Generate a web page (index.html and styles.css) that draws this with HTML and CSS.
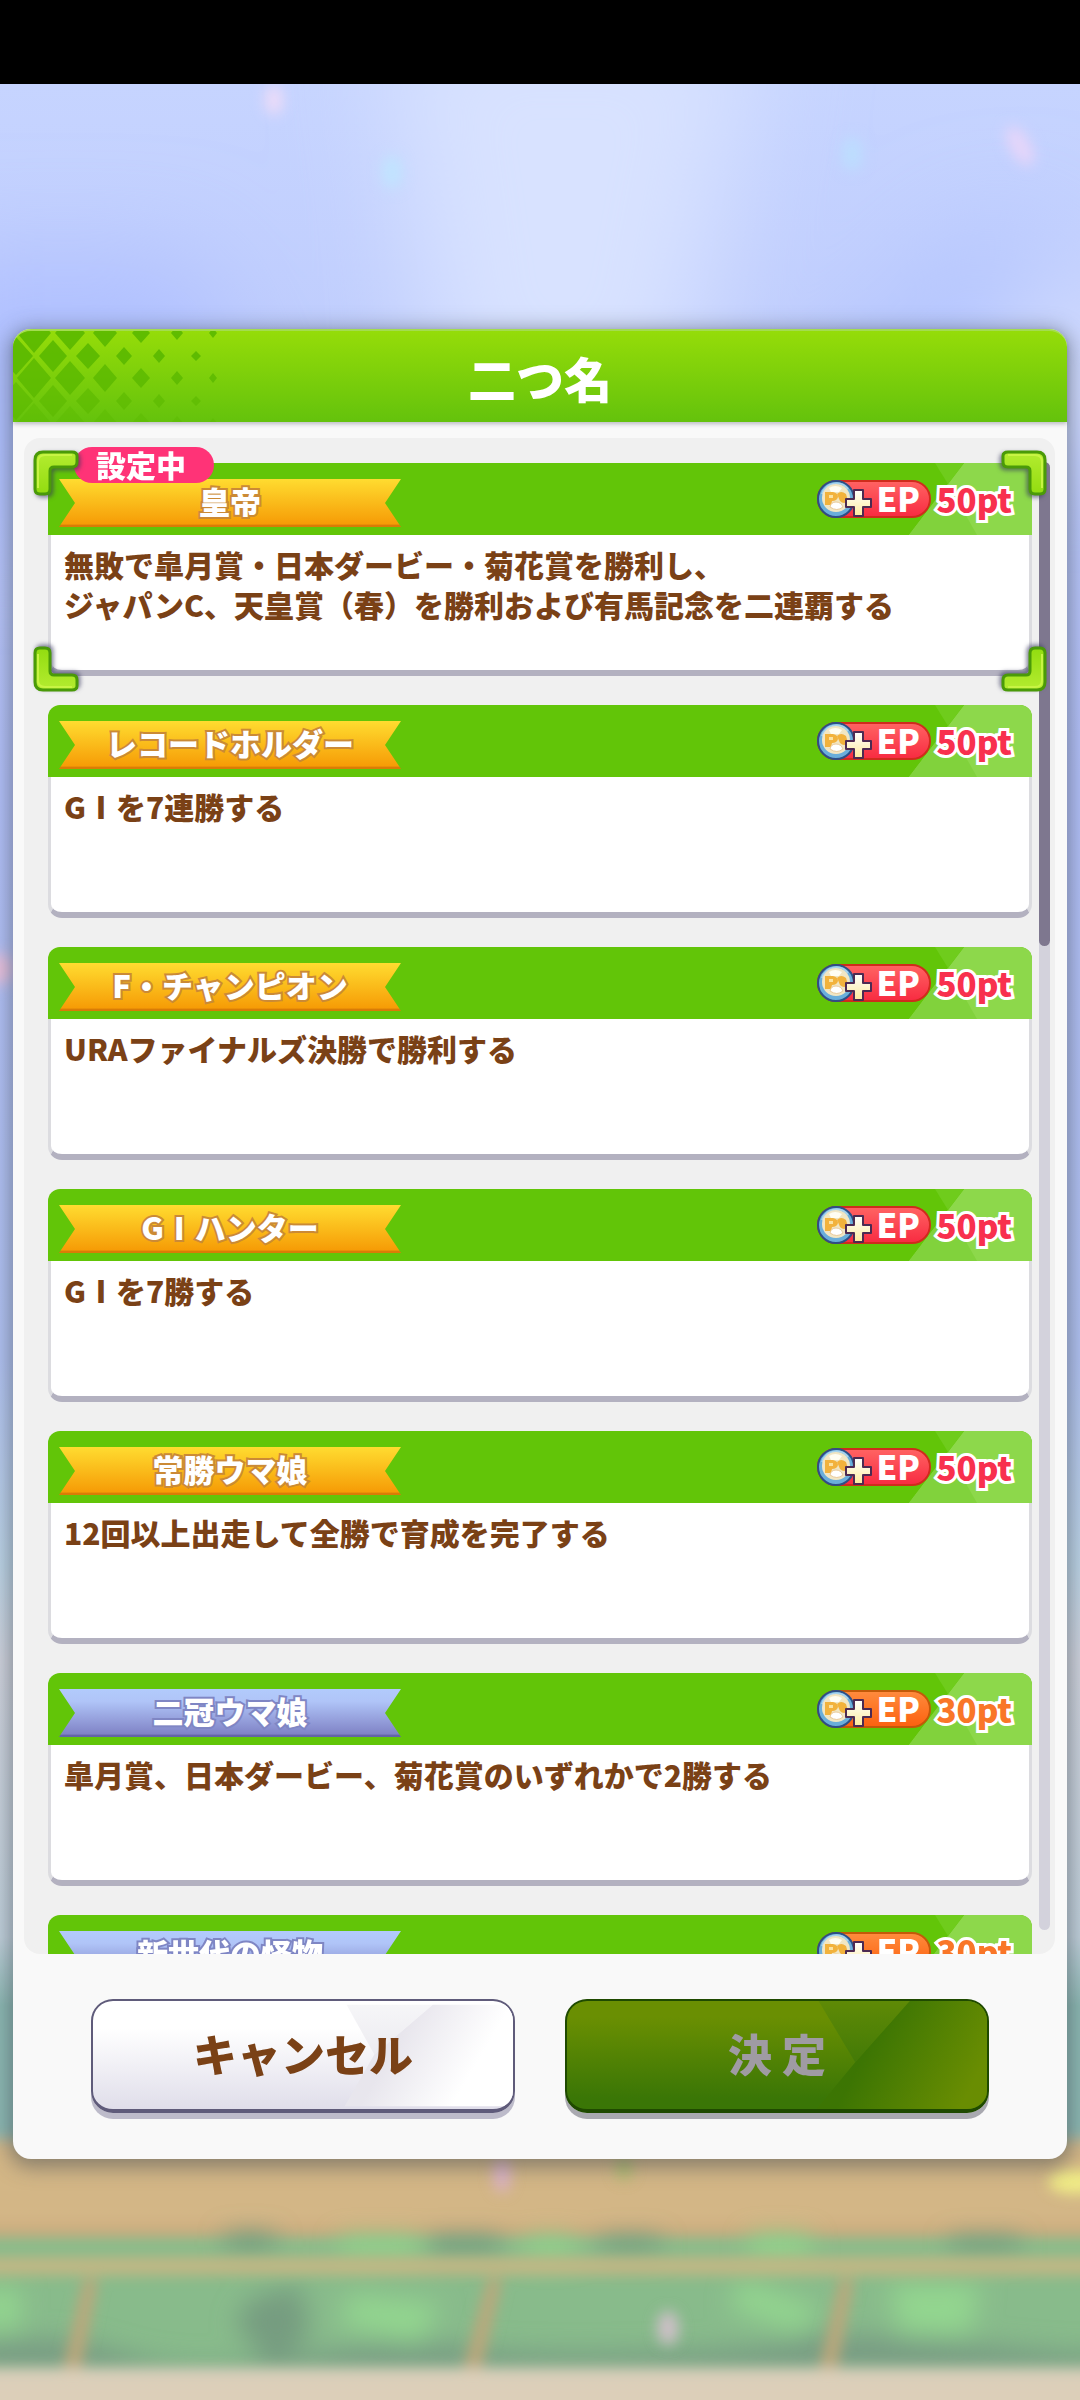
FILE: index.html
```html
<!DOCTYPE html>
<html lang="ja">
<head>
  <meta charset="UTF-8">
  <meta name="viewport" content="width=device-width, initial-scale=1.0">
  <title>二つ名</title>
  <link rel="stylesheet" href="styles.css">
</head>
<body>
  <!-- 共通アイコン -->
  <svg class="defs" aria-hidden="true">
    <defs>
      <linearGradient id="bracketFill" x1="0" y1="0" x2="0" y2="1">
        <stop offset="0" stop-color="#b4ec30"/>
        <stop offset="1" stop-color="#92dc10"/>
      </linearGradient>
      <linearGradient id="plusFill" x1="0" y1="0" x2="0" y2="1">
        <stop offset="0" stop-color="#ffffff"/>
        <stop offset="1" stop-color="#fdeb9c"/>
      </linearGradient>
    </defs>
    <symbol id="bracket" viewBox="0 0 46 46">
      <path d="M10 2H39Q44 2 44 6V12Q44 17 39 17H21Q17 17 17 21V39Q17 44 12 44H7Q2 44 2 39V10Q2 2 10 2Z" fill="url(#bracketFill)" stroke="#4a9a08" stroke-width="3"/>
      <path d="M5 38V12Q5 5 12 5H39" fill="none" stroke="#c8f444" stroke-width="2"/>
    </symbol>
    <symbol id="shine" viewBox="0 0 125 72">
      <path d="M57 0H125V72H2Z" fill="#8dd84b"/>
      <path d="M28 0H57L41 21Z" fill="#6fcc1c"/>
      <path d="M41 21L70 72H2Z" fill="#81d23c"/>
    </symbol>
    <symbol id="coin" viewBox="0 0 56 38">
      <circle cx="19" cy="19" r="18" fill="#6aaedb" stroke="#2d4f86" stroke-width="2"/>
      <path d="M5 14A15 15 0 0 1 31 9" fill="none" stroke="#a5d2ee" stroke-width="2"/>
      <circle cx="19" cy="18" r="14" fill="#f1e6c4"/>
      <path d="M12 8q6-4 13 0l-3 4h-8z" fill="#fffdf2"/>
      <path d="M8 25V12h8q5 1 5 5-1 4-6 4l-1 4z" fill="#f2b23c"/>
      <path d="M12 15h4v3h-4z" fill="#fbe2a0"/>
      <path d="M20 14q4-4 9 0l2 7q-4 4-8 0z" fill="#f2b23c"/>
      <path d="M13 27q1-5 6-5t7 5q-6 5-13 0z" fill="#ffffff" stroke="#e9c99a"/>
      <path d="M37 10h9v9h8v8h-8v9h-9v-9h-8v-8h8z" fill="url(#plusFill)" stroke="#4d2a52" stroke-width="2" stroke-linejoin="round"/>
    </symbol>
  </svg>

  <div class="status-bar"></div>

  <main class="stage">
    <svg class="scene" viewBox="0 0 1080 2316" preserveAspectRatio="xMidYMax slice" aria-hidden="true">
      <defs>
        <linearGradient id="sky" x1="0" y1="0" x2="0" y2="1">
          <stop offset="0" stop-color="#c6d4ff"/>
          <stop offset="0.300" stop-color="#b4c1fb"/>
          <stop offset="0.550" stop-color="#b3c4f4"/>
          <stop offset="0.640" stop-color="#bfd6e8"/>
          <stop offset="0.680" stop-color="#d2d5df"/>
          <stop offset="0.800" stop-color="#c3d2dd"/>
          <stop offset="0.830" stop-color="#8db9b3"/>
          <stop offset="0.880" stop-color="#8db9b3"/>
        </linearGradient>
        <filter id="haze" x="-50%" y="-50%" width="200%" height="200%"><feGaussianBlur stdDeviation="55"/></filter>
        <filter id="leaf" x="-20%" y="-50%" width="140%" height="200%"><feGaussianBlur stdDeviation="13"/></filter>
        <filter id="soft" x="-20%" y="-20%" width="140%" height="140%"><feGaussianBlur stdDeviation="7"/></filter>
      </defs>
      <rect width="1080" height="2316" fill="url(#sky)"/>
      <!-- 雲 -->
      <g filter="url(#haze)">
        <path d="M-80 180H200L270 440H-80Z" fill="#afbfff"/>
        <path d="M380 -80H760L680 340H440Z" fill="#d8e2ff"/>
        <path d="M960 160L1060 140L900 360L800 340Z" fill="#b0c2ff"/>
        <path d="M1020 280L1120 180V360H980Z" fill="#dde5ff"/>
      </g>
      <!-- コース -->
      <g filter="url(#soft)">
        <path d="M-30 2055H1110V2156H-30Z" fill="#d3b686"/>
        <path d="M-30 2142H1110V2155H-30Z" fill="#cda87c"/>
        <path d="M-30 2152H1110V2290H-30Z" fill="#88bb8b"/>
      </g>
      <g filter="url(#leaf)">
        <path d="M225 2150h50v18h-50zM430 2154h70v18h-70zM600 2154h60v16h-60zM950 2154h70v16h-70z" fill="#6f957c"/>
        <path d="M340 2154h80v20h-80zM525 2155h50v20h-50zM750 2152h60v24h-60z" fill="#93d68c"/>
        <path d="M250 2215L300 2200 310 2250 275 2285 235 2240Z" fill="#769c80"/>
        <path d="M350 2210l90 10-20 40-80-20zM740 2195l80 30-20 24-70-25zM890 2200h90l-10 50h-70zM-20 2205h40v40h-40z" fill="#93d68f"/>
        <path d="M-30 2262Q50 2245 120 2268T300 2272 460 2262 640 2268 800 2255 1000 2262 1110 2256V2288H-30Z" fill="#789b83"/>
      </g>
      <g filter="url(#soft)">
        <path d="M-30 2173H1110V2191H-30Z" fill="#c3b784"/>
        <path d="M84 2195h14L80 2290H62ZM488 2195h14l-22 95h-18ZM840 2195h14l-18 95h-18Z" fill="#bca77c"/>
        <path d="M-30 2284H1110V2340H-30Z" fill="#dccfb9"/>
      </g>
      <!-- 紙吹雪 -->
      <g filter="url(#soft)">
        <ellipse cx="274" cy="16" rx="9" ry="15" fill="#eedcf8"/>
        <ellipse cx="392" cy="88" rx="10" ry="17" fill="#c0e4ff"/>
        <ellipse cx="852" cy="70" rx="10" ry="17" fill="#bcdefe"/>
        <ellipse cx="1020" cy="62" rx="10" ry="22" transform="rotate(-30 1020 62)" fill="#e6d5f9"/>
        <ellipse cx="0" cy="885" rx="14" ry="16" fill="#ecc2de"/>
        <ellipse cx="502" cy="2090" rx="9" ry="18" fill="#dcb2c8"/>
        <ellipse cx="624" cy="2084" rx="8" ry="12" fill="#aebc70"/>
        <ellipse cx="668" cy="2244" rx="11" ry="17" fill="#cec0c8"/>
        <ellipse cx="1076" cy="2098" rx="28" ry="12" fill="#f0ec86"/>
      </g>
    </svg>

    <section class="dialog" role="dialog" aria-labelledby="dialogTitle">
      <header class="dialog-header">
        <svg class="lattice" viewBox="0 0 216 92" aria-hidden="true">
          <defs>
            <g id="latticeRowA">
              <path d="M21-20L38 0 21 20 4 0ZM57-17L72 0 57 17 42 0ZM92-14L104 0 92 14 80 0ZM128-10L137 0 128 10 119 0ZM164-7L170 0 164 7 158 0ZM200-5L204 0 200 5 196 0Z"/>
            </g>
            <g id="latticeRowB">
              <path d="M3-19L20 0 3 19-14 0ZM40-16L54 0 40 16 26 0ZM75-13L87 0 75 13 63 0ZM111-9L119 0 111 9 103 0ZM146-7L152 0 146 7 140 0ZM183-5L188 0 183 5 178 0Z"/>
            </g>
          </defs>
          <g fill="#5ab800">
            <use href="#latticeRowA" y="2" opacity="0.9"/>
            <use href="#latticeRowB" y="25" opacity="0.9"/>
            <use href="#latticeRowA" y="47" opacity="0.8"/>
            <use href="#latticeRowB" y="70" opacity="0.6"/>
            <use href="#latticeRowA" y="92" opacity="0.4"/>
          </g>
        </svg>
        <h1 id="dialogTitle">二つ名</h1>
      </header>

      <div class="panel">
        <div class="scrollbar"><div class="scrollbar-thumb"></div></div>
        <ul class="list">
          <li class="card selected">
            <div class="card-head">
              <svg class="shine"><use href="#shine"/></svg>
              <h2 class="ribbon gold">皇帝</h2>
              <div class="reward red">
                <span class="ep"><svg class="coin"><use href="#coin"/></svg>EP</span>
                <span class="pt">50pt</span>
              </div>
            </div>
            <p class="card-text">無敗で皐月賞・日本ダービー・菊花賞を勝利し、<br>ジャパンC、天皇賞（春）を勝利および有馬記念を二連覇する</p>
            <span class="badge">設定中</span>
            <svg class="bracket tl"><use href="#bracket"/></svg>
            <svg class="bracket tr"><use href="#bracket"/></svg>
            <svg class="bracket bl"><use href="#bracket"/></svg>
            <svg class="bracket br"><use href="#bracket"/></svg>
          </li>
          <li class="card">
            <div class="card-head">
              <svg class="shine"><use href="#shine"/></svg>
              <h2 class="ribbon gold">レコードホルダー</h2>
              <div class="reward red">
                <span class="ep"><svg class="coin"><use href="#coin"/></svg>EP</span>
                <span class="pt">50pt</span>
              </div>
            </div>
            <p class="card-text">GⅠを7連勝する</p>
          </li>
          <li class="card">
            <div class="card-head">
              <svg class="shine"><use href="#shine"/></svg>
              <h2 class="ribbon gold">F・チャンピオン</h2>
              <div class="reward red">
                <span class="ep"><svg class="coin"><use href="#coin"/></svg>EP</span>
                <span class="pt">50pt</span>
              </div>
            </div>
            <p class="card-text">URAファイナルズ決勝で勝利する</p>
          </li>
          <li class="card">
            <div class="card-head">
              <svg class="shine"><use href="#shine"/></svg>
              <h2 class="ribbon gold">GⅠハンター</h2>
              <div class="reward red">
                <span class="ep"><svg class="coin"><use href="#coin"/></svg>EP</span>
                <span class="pt">50pt</span>
              </div>
            </div>
            <p class="card-text">GⅠを7勝する</p>
          </li>
          <li class="card">
            <div class="card-head">
              <svg class="shine"><use href="#shine"/></svg>
              <h2 class="ribbon gold">常勝ウマ娘</h2>
              <div class="reward red">
                <span class="ep"><svg class="coin"><use href="#coin"/></svg>EP</span>
                <span class="pt">50pt</span>
              </div>
            </div>
            <p class="card-text">12回以上出走して全勝で育成を完了する</p>
          </li>
          <li class="card">
            <div class="card-head">
              <svg class="shine"><use href="#shine"/></svg>
              <h2 class="ribbon silver">二冠ウマ娘</h2>
              <div class="reward orange">
                <span class="ep"><svg class="coin"><use href="#coin"/></svg>EP</span>
                <span class="pt">30pt</span>
              </div>
            </div>
            <p class="card-text">皐月賞、日本ダービー、菊花賞のいずれかで2勝する</p>
          </li>
          <li class="card">
            <div class="card-head">
              <svg class="shine"><use href="#shine"/></svg>
              <h2 class="ribbon silver">新世代の怪物</h2>
              <div class="reward orange">
                <span class="ep"><svg class="coin"><use href="#coin"/></svg>EP</span>
                <span class="pt">30pt</span>
              </div>
            </div>
            <p class="card-text"></p>
          </li>
        </ul>
      </div>

      <footer class="actions">
        <button class="btn btn-cancel" type="button">
          <svg class="btn-shine" viewBox="0 0 424 113" preserveAspectRatio="none" aria-hidden="true">
            <defs>
              <linearGradient id="cancelShine" gradientUnits="userSpaceOnUse" x1="300" y1="56" x2="370" y2="96">
                <stop offset="0" stop-color="#e8e6ed"/>
                <stop offset="1" stop-color="#ffffff"/>
              </linearGradient>
              <linearGradient id="cancelNotch" x1="0" y1="0" x2="0" y2="1">
                <stop offset="0" stop-color="#f6f6f8"/>
                <stop offset="1" stop-color="#ecebf0"/>
              </linearGradient>
            </defs>
            <path d="M256 4H343L284 56Z" fill="url(#cancelNotch)"/>
            <path d="M343 4H424V110H254L284 56Z" fill="url(#cancelShine)"/>
          </svg>
          <span>キャンセル</span>
        </button>
        <button class="btn btn-ok" type="button" disabled>
          <svg class="btn-shine" viewBox="0 0 424 113" preserveAspectRatio="none" aria-hidden="true">
            <defs>
              <linearGradient id="okShine" gradientUnits="userSpaceOnUse" x1="300" y1="56" x2="400" y2="106">
                <stop offset="0" stop-color="#3c7503"/>
                <stop offset="1" stop-color="#698d02"/>
              </linearGradient>
              <linearGradient id="okNotch" x1="0" y1="0" x2="0" y2="1">
                <stop offset="0" stop-color="#5f8a06"/>
                <stop offset="1" stop-color="#437a07"/>
              </linearGradient>
            </defs>
            <path d="M254 0H346L291 64Z" fill="url(#okNotch)"/>
            <path d="M346 0H424V113H252L291 64Z" fill="url(#okShine)"/>
          </svg>
          <span>決 定</span>
        </button>
      </footer>
    </section>
  </main>
</body>
</html>
```
FILE: styles.css
```css
*{
  box-sizing: border-box;
  margin: 0;
  padding: 0;
}
body{
  display: flex;
  flex-direction: column;
  height: 100vh;
  overflow: hidden;
  background: #000;
  color: #7a4116;
  font-family: "Noto Sans CJK JP", "Noto Sans", sans-serif;
  font-weight: 900;
}
.defs{
  position: absolute;
  width: 0;
  height: 0;
}
.status-bar{
  flex: none;
  height: 84px;
}
.stage{
  position: relative;
  display: flex;
  flex: 1;
  min-height: 0;
  padding: 245px 13px 241px;
  overflow: hidden;
}
.scene{
  position: absolute;
  inset: 0;
  width: 100%;
  height: 100%;
}

/* ダイアログ */
.dialog{
  position: relative;
  display: flex;
  flex: 1;
  flex-direction: column;
  min-width: 0;
  border-radius: 18px;
  background: #f9f9f9;
  box-shadow: 0 4px 20px 4px rgba(60, 70, 80, 0.5);
}
.dialog-header{
  position: relative;
  display: flex;
  flex: none;
  align-items: center;
  justify-content: center;
  height: 93px;
  border-top: 2px solid #a3dc50;
  border-radius: 18px 18px 0 0;
  background: linear-gradient(#95dc09, #64c20c);
  box-shadow: 0 2px 4px rgba(90, 90, 110, 0.4);
  overflow: hidden;
}
.lattice{
  position: absolute;
  top: 0;
  left: 0;
  width: 216px;
  height: 92px;
}
.dialog-header h1{
  color: #fff;
  font-size: 48px;
  line-height: 60px;
  font-weight: 900;
}

/* 一覧 */
.panel{
  position: relative;
  flex: 1;
  min-height: 0;
  margin: 16px 12px 0 11px;
  border-radius: 16px;
  background: #f0f0f0;
}
.list{
  position: relative;
  height: 100%;
  padding: 25px 23px 24px 24px;
  overflow-y: auto;
  scrollbar-width: none;
  list-style: none;
}
.scrollbar{
  position: absolute;
  top: 24px;
  right: 5px;
  bottom: 24px;
  width: 11px;
  border-radius: 6px;
  background: #d3d2dc;
}
.scrollbar-thumb{
  height: 33%;
  border-radius: 6px;
  background: #7e778f;
}
.card{
  position: relative;
  margin-bottom: 29px;
}
.card-head{
  position: relative;
  display: flex;
  align-items: center;
  justify-content: space-between;
  height: 72px;
  padding: 0 20px 0 11px;
  border-radius: 12px 12px 0 0;
  background: #62c508;
  overflow: hidden;
}
.selected .card-head{
  border-radius: 0;
}
.shine{
  position: absolute;
  top: 0;
  right: 0;
  width: 125px;
  height: 72px;
}
.ribbon{
  width: 342px;
  height: 48px;
  margin-top: 8px;
  color: #fff;
  font-size: 31px;
  line-height: 44px;
  font-weight: 900;
  text-align: center;
  clip-path: polygon(0 0, 100% 0, calc(100% - 16px) 50%, 100% 100%, 0 100%, 16px 50%);
  paint-order: stroke fill;
}
.gold{
  background: linear-gradient(#ffdc30, #f69c06 94%, #d97c06 96%);
  -webkit-text-stroke: 4px #cb8a35;
}
.silver{
  background: linear-gradient(#b2cbfc, #b0c5f8 25%, #8083c6 94%, #6464a8 96%);
  -webkit-text-stroke: 4px #7f86c4;
}
.reward{
  position: relative;
  display: flex;
  align-items: center;
  gap: 5px;
  font-size: 33px;
  line-height: 32px;
}
.ep{
  display: flex;
  gap: 3px;
  width: 114px;
  height: 38px;
  border-radius: 19px;
  color: #fff;
}
.coin{
  width: 56px;
  height: 38px;
}
.pt{
  -webkit-text-stroke: 6px #fff;
  paint-order: stroke fill;
}
.red .ep{
  border: 2px solid #cf2c1c;
  background: linear-gradient(#ff6262, #f82c42);
}
.red .pt{
  color: #f8304e;
}
.orange .ep{
  border: 2px solid #c25a08;
  background: linear-gradient(#ff8a3c, #fc6210);
}
.orange .pt{
  color: #f97628;
}
.ep .coin{
  flex: none;
  margin: -2px 0 0 -2px;
}
.card-text{
  min-height: 141px;
  padding: 9px 13px 0;
  border: 3px solid #dcdce0;
  border-top: 0;
  border-bottom: 6px solid #b3b1c0;
  border-radius: 0 0 14px 14px;
  background: #fff;
  font-size: 30px;
  line-height: 40px;
}

/* 設定中のカード */
.badge{
  position: absolute;
  top: -16px;
  left: 26px;
  padding: 0 28px 2px 22px;
  border-radius: 18px;
  background: #ff3377;
  color: #fff;
  font-size: 30px;
  line-height: 34px;
}
.bracket{
  position: absolute;
  width: 46px;
  height: 46px;
  filter: drop-shadow(2px 2px 2px rgba(50, 50, 90, 0.6));
}
.tl{
  top: -13px;
  left: -15px;
}
.tr{
  top: -13px;
  right: -15px;
  transform: scaleX(-1);
}
.bl{
  bottom: -16px;
  left: -15px;
  transform: scaleY(-1);
}
.br{
  right: -15px;
  bottom: -16px;
  transform: scale(-1);
}

/* ボタン */
.actions{
  display: flex;
  flex: none;
  gap: 50px;
  padding: 45px 78px 46px;
}
.btn{
  position: relative;
  flex: 1;
  height: 114px;
  padding-bottom: 4px;
  border: 2px solid #5f5b7a;
  border-bottom-width: 4px;
  border-radius: 22px;
  font-family: inherit;
  font-size: 44px;
  line-height: 64px;
  font-weight: 900;
  overflow: hidden;
}
.btn span{
  position: relative;
}
.btn-shine{
  position: absolute;
  inset: 0;
  width: 100%;
  height: 100%;
}
.btn-cancel{
  background: linear-gradient(#fff 25%, #e0deea);
  box-shadow: 0 6px 0 #bdbbca;
  color: #7a4116;
}
.btn-ok{
  border-color: #1f4a00;
  background: linear-gradient(#6a8f02 15%, #3a7606 90%);
  box-shadow: 0 6px 0 #a9a9b0;
  color: #9f9ba3;
}
```
